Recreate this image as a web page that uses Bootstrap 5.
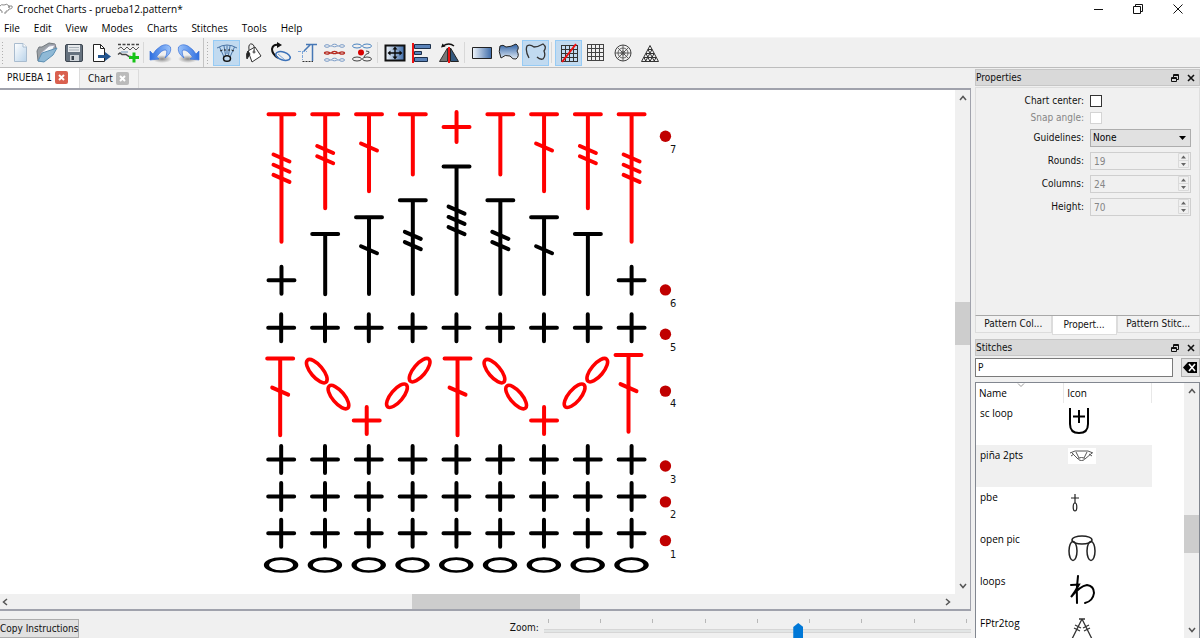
<!DOCTYPE html>
<html lang="en">
<head>
<meta charset="utf-8">
<meta name="viewport" content="width=device-width, initial-scale=1">
<title>Crochet Charts - prueba12.pattern*</title>
<link href="https://cdn.jsdelivr.net/npm/bootstrap@5.3.0/dist/css/bootstrap.min.css" rel="stylesheet">
<style>
  :root { --ui: "DejaVu Sans Condensed", "Noto Sans", sans-serif; --sys: "Open Sans", "Noto Sans", sans-serif; --edge: #a0a2ac; --face: #f0f0f0; }
  body { font: 10px/14px var(--ui); color: #111; background: var(--face); }
  button, input, select { font: inherit; color: inherit; border-radius: 0; }
  svg { display: block; flex: none; }
  .sys { font-family: var(--sys); color: #000; }
  .bare { border: 0; background: none; padding: 0; }
  .fit { min-width: 0; min-height: 0; }

  .titlebar { height: 18px; background: #fff; padding-right: 2px; }
  .win-btn { width: 40px; height: 18px; display: grid; place-items: center; }
  .menubar { height: 20px; background: #fff; border-bottom: 1px solid #f6f6f6; }
  .menubar a { color: #000; text-decoration: none; padding: 0 7px; line-height: 20px; }

  .tools { height: 30px; border-bottom: 1px solid #bdbdbd; }
  .grip { width: 3px; height: 24px; margin: 0 2px 0 1px; background: radial-gradient(circle, #b0b0b0 1px, transparent 1px) 0 0 / 3px 3px; }
  .tool { width: 27px; height: 26px; display: grid; place-items: center; border: 1px solid transparent; padding: 0; background: none; }
  .tool.on { background: #c1daf0; border-color: #96cbf5; }
  .gap-line { width: 1px; height: 21px; margin: 0 3px 0 2px; background: #d8d8d8; }
  .bar-edge { width: 1px; height: 29px; margin: 0 1px 0 2px; background: #c4c4c4; }

  .tabs { height: 20px; }
  .tab-doc { display: flex; align-items: center; gap: 3px; border: 0; border-right: 1px solid #dcdcdc; padding: 0 5px 0 7px; }
  .tab-doc.on { background: #fff; width: 80px; }
  .tab-doc.off { margin-top: 1px; width: 59px; padding-left: 8px; border-top: 1px solid #e2e2e2; background: #f2f2f2; }
  .x-box { width: 13px; height: 13px; border-radius: 2px; display: grid; place-items: center; background: #bbb; }
  .on .x-box { background: #d9604f; }
  .frame { border: solid var(--edge); border-width: 2px 1px 2px 0; background: #fff; }
  .chart { flex: 1 1 0; height: 100%; }
  .bar-v { width: 15px; background: var(--face); }
  .bar-h { height: 15px; background: var(--face); padding-right: 15px; }
  .arrow { flex: none; width: 15px; height: 16px; display: grid; place-items: center; }
  .thumb { background: #cdcdcd; }

  .footer-bar { height: 27px; }
  .push { width: 79px; height: 19px; border: 1px solid #adadad; border-left: 0; background: #e1e1e1; padding: 0; text-align: left; white-space: nowrap; }
  .zoom-label { margin: 0 5px 3px 0; }
  .zoom-box { width: 44%; }
  .ticks { height: 4px; margin: 0 4px; }
  .ticks i { width: 1px; background: #b8b8b8; }
  .zoom-range { appearance: none; -webkit-appearance: none; display: block; width: 100%; height: 18px; margin: 0; background: linear-gradient(#e2e5e5, #e2e5e5) 0 7px / 100% 2px no-repeat, linear-gradient(#d6d6d6, #d6d6d6) 0 6px / 100% 4px no-repeat; }
  .zoom-range::-webkit-slider-thumb { -webkit-appearance: none; width: 10px; height: 18px; background: #0078d7; clip-path: polygon(50% 0, 100% 4px, 100% 100%, 0 100%, 0 4px); }

  .dock { width: 225px; }
  .dock > * { flex: none; }
  .dock-title { height: 17px; background: #d9d9d9; border: 1px solid #c6c6c6; margin-top: 1px; }
  .dock-title h2 { font: inherit; margin: 0; }
  .panel { height: 229px; border: 1px solid #dedede; border-bottom-color: #a8a8a8; padding: 7px 8px 0 0; margin-top: 1px; }
  .form-grid { display: grid; grid-template-columns: 108fr 101fr; gap: 5px 6px; align-items: center; }
  .form-grid label { text-align: right; line-height: 12px; }
  .tick-box { appearance: none; width: 12px; height: 12px; margin: 0; border: 1px solid #333; background: #fff; display: block; }
  .tick-box:disabled { border-color: #d4d4d4; }
  .dim { color: #868686; }
  .pick { appearance: none; width: 100%; height: 18px; padding: 0 2px; border: 1px solid #adadad; background: #e1e1e1; color: #000; display: block; }
  .num { appearance: textfield; width: 100%; height: 18px; padding: 0 3px; border: 1px solid #cfcfcf; background: var(--face); color: #868686; display: block; }
  .num::-webkit-inner-spin-button { appearance: none; margin: 0; }
  .over { position: absolute; right: 2px; top: 1px; pointer-events: none; }

  .dock-tabs { height: 19px; }
  .dock-tab { border: 1px solid #dcdcdc; border-top: 0; background: #f2f2f2; padding: 0; height: 17px; }
  .dock-tab.on { background: #fff; height: 19px; }
  .find-row { margin-top: 2px; }
  .find { height: 19px; border: 1px solid #7a7a7a; background: #fff; padding: 0 2px; min-width: 0; }
  .clear { width: 19px; height: 19px; border: 1px solid #adadad; background: #e1e1e1; padding: 0; display: grid; place-items: center; }
  .dock > .list-frame { flex: 1 1 0; min-height: 0; border: 1px solid #828790; border-bottom: 0; background: #fff; margin-top: 5px; }
  .stitch-list { width: 176px; table-layout: fixed; border-collapse: collapse; }
  .stitch-list th { height: 20px; font-weight: 400; padding: 0 4px 0 3px; border-right: 1px solid #e8e8e8; }
  .stitch-list td { height: 42px; padding: 3px 0 0 4px; vertical-align: top; }
  .stitch-list .picked { background: #f0f0f0; }
  .sort-mark { position: absolute; left: 41px; top: 0; }
</style>
</head>
<body>
<div class="d-flex flex-column vh-100 overflow-hidden">
  <header>
    <div class="titlebar d-flex align-items-center sys">
      <svg width="13" height="12" viewBox="0 0 13 12" fill="none" stroke="#8a8a8a"><path d="M0 3Q1 1 4 2Q7 0 9 3L12 3Q13 6 9 6Q8 9 6 8V10M2 10V8Q0 8 0 6M4 10H6"/><path d="M8 4H10" stroke="#555"/></svg>
      <span class="ms-1 flex-grow-1">Crochet Charts - prueba12.pattern*</span>
      <button class="bare win-btn" aria-label="Minimize"><svg width="9" height="9" stroke="#111"><path d="M0 4.500H9"/></svg></button>
      <button class="bare win-btn" aria-label="Restore"><svg width="10" height="10" fill="none" stroke="#111"><path d="M.5 2.500H7.500V9.500H.5ZM2.500 2V.5H9.500V7.500H8"/></svg></button>
      <button class="bare win-btn" aria-label="Close"><svg width="10" height="10" stroke="#111"><path d="M.5 .5L9.500 9.500M9.500 .5L.5 9.500"/></svg></button>
    </div>
    <nav class="menubar d-flex sys">
      <a href="#" class="ps-1">File</a><a href="#">Edit</a><a href="#">View</a><a href="#">Modes</a><a href="#">Charts</a><a href="#">Stitches</a><a href="#">Tools</a><a href="#">Help</a>
    </nav>
    <div class="tools d-flex align-items-center">
      <svg width="0" height="0" class="position-absolute"><defs>
        <linearGradient id="paper" x2="1" y2="1"><stop offset="0" stop-color="#fff"/><stop offset="1" stop-color="#b9d3ea"/></linearGradient>
        <linearGradient id="arrowBlue" x2="1"><stop offset="0" stop-color="#2f6fe0"/><stop offset="1" stop-color="#9cc4fb"/></linearGradient>
        <linearGradient id="steel" x2="1"><stop offset="0" stop-color="#f2f7fc"/><stop offset="1" stop-color="#3c6aa8"/></linearGradient>
        <linearGradient id="steelDown" x2="0" y2="1"><stop offset="0" stop-color="#2f61a4"/><stop offset="1" stop-color="#e4eef8"/></linearGradient>
        <radialGradient id="shade"><stop offset="0" stop-color="#8a8a8a"/><stop offset="1" stop-color="#f0f0f0"/></radialGradient>
      </defs></svg>
      <span class="grip"></span>
      <button class="tool" aria-label="New"><svg width="22" height="22"><path d="M5.500 1.500H14L17.500 5V19.500H5.500Z" fill="url(#paper)" stroke="#a9bccf"/><path d="M14 1.500V5H17.500" fill="#fff" stroke="#a9bccf"/></svg></button>
      <button class="tool" aria-label="Open"><svg width="22" height="22"><path d="M1 9L3 5H6L13 1L19 2L20 6L8 19H2Z" fill="#9aa0a6" stroke="#72787e"/><path d="M5 11L13 4L19 3L16 9L8 17Z" fill="#f4f8fb" stroke="#aab"/><path d="M2 19L6 11L12 9L21 6L17 13L8 20Z" fill="#8fb9d6" stroke="#5d90b4"/></svg></button>
      <button class="tool" aria-label="Save"><svg width="22" height="22"><rect x="2.500" y="2.500" width="17" height="17" rx="1.500" fill="#66727f" stroke="#3d4650"/><path d="M5 3H17V10H5Z" fill="#e6e9ec"/><path d="M6 5.500H16M6 8H16" stroke="#a8b0b8"/><path d="M7 13H16V19H7Z" fill="#cfd4d9"/><path d="M8.500 14H11V18H8.500Z" fill="#39424c"/></svg></button>
      <button class="tool" aria-label="Export"><svg width="22" height="22"><path d="M3.500 2.500H10.500L14.500 6.500V19.500H3.500Z" fill="#fff" stroke="#222"/><path d="M10.500 2.500V6.500H14.500" fill="none" stroke="#222"/><path d="M8 13H15V10L21 14.500L15 19V16H8Z" fill="#23558f"/></svg></button>
      <button class="tool" aria-label="Add pattern"><svg width="24" height="22" fill="none" stroke="#444"><path d="M2 2.500H23" stroke-dasharray="3 1.500" stroke-width="1.600"/><path d="M2 7L5 5L8 8L11 5L14 8L17 5L20 8L23 5" stroke-width=".9"/><path d="M2 12.500L4 11L6 12.500H10L13 14.500H15" stroke-width="1.500"/><path d="M5 10H12" stroke="#6c93b8"/><path d="M18 10.500V20.500M13 15.500H23" stroke="#16c316" stroke-width="3"/></svg></button>
      <span class="gap-line"></span>
      <button class="tool" aria-label="Undo"><svg width="24" height="22"><ellipse cx="13" cy="17" rx="10" ry="4" fill="url(#shade)"/><path d="M1 9V18L10 17L7.500 15Q13 7 17 8Q19 10 16 16Q23 11 21.500 5Q18 1 12 4Q7 7 4 12Z" fill="url(#arrowBlue)" stroke="#3c72d8" stroke-width=".7"/></svg></button>
      <button class="tool" aria-label="Redo"><svg width="24" height="22"><ellipse cx="12" cy="17" rx="10" ry="4" fill="url(#shade)"/><path transform="matrix(-1 0 0 1 24 0)" d="M1 9V18L10 17L7.500 15Q13 7 17 8Q19 10 16 16Q23 11 21.500 5Q18 1 12 4Q7 7 4 12Z" fill="url(#arrowBlue)" stroke="#3c72d8" stroke-width=".7"/></svg></button>
      <span class="bar-edge"></span><span class="grip me-1"></span>
      <button class="tool on" aria-label="Stitch mode"><svg width="22" height="22" fill="none" stroke="#4a74a5"><path d="M1 6Q11 0 21 6M8 15L3.500 5M14 15L18.500 5M9.500 13L8 4M12.500 13L14 4M11 12V3.500"/><path d="M4 9L6.500 8M18 9L15.500 8M8 8H10M12 8H14" stroke="#222"/><ellipse cx="11" cy="16.500" rx="3.500" ry="2.800" stroke="#111" stroke-width="1.500"/></svg></button>
      <button class="tool" aria-label="Colour mode"><svg width="22" height="22" fill="none" stroke="#333"><path d="M5 9L12 5L18 14L9 20Z" fill="#fff"/><path d="M6 8Q5 1 9 2Q12 3 11 9M5 9Q3 11 4 16" /><path d="M5 9Q3 12 4 17L7 12Z" fill="#222"/><circle cx="11" cy="10" r="1"/></svg></button>
      <button class="tool" aria-label="Row mode"><svg width="22" height="22" fill="none"><path d="M9 3Q3 2 2 7Q2 12 8 16" stroke="#111" stroke-width="2"/><path d="M7 0L12 3L7 6Z" fill="#111"/><ellipse cx="13" cy="14" rx="7.500" ry="4" transform="rotate(18 13 14)" stroke="#3b71b8" stroke-width="1.500"/><path d="M8 12L15 18" stroke="#7ba5dc"/></svg></button>
      <button class="tool" aria-label="Angle mode"><svg width="22" height="22" fill="none"><path d="M9 2.500H20M15.500 3V19M7 9L13 3" stroke="#4677b5" stroke-width="1.500"/><path d="M5.500 19.500H16" stroke="#333" stroke-dasharray="2 1"/><path d="M1 9.500H10M5.500 9V18" stroke="#7fa8da" stroke-dasharray="3 1"/></svg></button>
      <button class="tool" aria-label="Stitch rows"><svg width="23" height="22" fill="none"><g id="chainA" stroke="#7a9cc8"><ellipse cx="4" cy="4" rx="2.500" ry="1.300"/><ellipse cx="11.500" cy="3.500" rx="2.500" ry="1.300"/><ellipse cx="19" cy="4" rx="2.500" ry="1.300"/><path d="M6.500 4H9M14 4H16.500"/></g><use href="#chainA" y="14"/><g stroke="#b52a20" stroke-width="1.300"><ellipse cx="4" cy="11" rx="2.500" ry="1.100"/><ellipse cx="11.500" cy="10.500" rx="2.500" ry="1.100"/><ellipse cx="19" cy="11" rx="2.500" ry="1.100"/><path d="M6.500 11H9M14 11H16.500"/></g></svg></button>
      <button class="tool" aria-label="Chart centre"><svg width="22" height="22" fill="none"><g stroke="#4b84c0"><ellipse cx="6" cy="4" rx="4.500" ry="2"/><ellipse cx="16" cy="4" rx="4.500" ry="2"/></g><g stroke="#444"><ellipse cx="6" cy="17" rx="4.500" ry="2"/><ellipse cx="16" cy="17" rx="4.500" ry="2"/><path d="M15 9Q19 9 18 11Q14 12 13 15"/></g><circle cx="10" cy="10.500" r="3" fill="#d80000"/></svg></button>
      <span class="gap-line"></span>
      <button class="tool" aria-label="Distribute"><svg width="22" height="22"><path d="M1.500 3.500H20.500V18.500H1.500Z" fill="url(#steel)" stroke="#111" stroke-width="2"/><path d="M11 4.500L13.500 7.500H11.700V10.300H15.500V8.500L18.500 11L15.500 13.500V11.700H11.700V14.500H13.500L11 17.500L8.500 14.500H10.300V11.700H6.500V13.500L3.500 11L6.500 8.500V10.300H10.300V7.500H8.500Z" fill="#0a0a0a"/></svg></button>
      <button class="tool" aria-label="Align"><svg width="22" height="22"><path d="M2 1V21" stroke="#e11" stroke-width="2"/><path d="M3.500 2.500H19.500V6.500H3.500ZM3.500 9.500H10.500V12.500H3.500ZM3.500 15.500H16.500V19.500H3.500Z" fill="#5a82b8" stroke="#1c2f4a"/></svg></button>
      <button class="tool" aria-label="Mirror"><svg width="22" height="22"><path d="M9.500 6V19.500H1.500Z" fill="#777" stroke="#333"/><path d="M12.500 6V19.500H20.500Z" fill="#33597f" stroke="#222"/><path d="M11 5V21" stroke="#e11" stroke-width="2"/><path d="M5 4Q11 0 16 4" fill="none" stroke="#111" stroke-width="1.500"/><path d="M3 5.500L4.500 1.500L7.500 4.500Z" fill="#111"/></svg></button>
      <span class="gap-line"></span>
      <button class="tool" aria-label="Rectangle fill"><svg width="22" height="22"><path d="M1.500 5.500H20.500V16.500H1.500Z" fill="url(#steel)" stroke="#222"/></svg></button>
      <button class="tool" aria-label="Shape fill"><svg width="22" height="22"><path d="M3 16Q0 9 2 4Q5 2 8 5Q13 5 18 2Q22 5 19 9Q22 14 18 17Q15 18 12 14Q7 12 3 16Z" fill="url(#steelDown)" stroke="#222"/></svg></button>
      <button class="tool on" aria-label="Shape outline"><svg width="22" height="22" fill="none" stroke="#333" stroke-width="1.300"><path d="M4 16Q0 9 2 4Q5 2 9 5Q13 5 18 2Q22 5 19 9Q21 14 18 17Q15 18 12 15"/></svg></button>
      <span class="gap-line"></span>
      <button class="tool on" aria-label="No grid"><svg width="22" height="22" fill="none"><path d="M3.500 3V20M7.500 3V20M11.500 3V20M15.500 3V20M19.500 3V20M3 3.500H20M3 7.500H20M3 11.500H20M3 15.500H20M3 19.500H20" stroke="#333"/><path d="M4 20L18 2" stroke="#f01010" stroke-width="2"/></svg></button>
      <button class="tool" aria-label="Square grid"><svg width="22" height="22" stroke="#444"><path d="M2.500 2V19M6.500 2V19M10.500 2V19M14.500 2V19M18.500 2V19M2 2.500H19M2 6.500H19M2 10.500H19M2 14.500H19M2 18.500H19"/></svg></button>
      <button class="tool" aria-label="Round grid"><svg width="22" height="22" fill="none" stroke="#444"><circle cx="11" cy="11" r="8"/><circle cx="11" cy="11" r="5" stroke-width=".8"/><circle cx="11" cy="11" r="2" stroke-width=".8"/><path d="M11 3V19M3 11H19M5.400 5.400L16.600 16.600M16.600 5.400L5.400 16.600" stroke-width=".8"/></svg></button>
      <button class="tool" aria-label="Triangle grid"><svg width="22" height="22" fill="none" stroke="#333"><path d="M11 3.500L19.500 19.500H2.500ZM9 7.500H13M7 11.500H15M5 15.500H17M9 7.500L15.500 19.500M7 11.500L11 19.500M5 15.500L7 19.500M13 7.500L6.500 19.500M15 11.500L11 19.500M17 15.500L15 19.500"/></svg></button>
    </div>
  </header>

  <div class="d-flex flex-grow-1 fit">
    <main class="d-flex flex-column flex-grow-1 fit">
      <div class="tabs d-flex">
        <button class="tab-doc on">PRUEBA 1 <span class="x-box"><svg width="7" height="7" stroke="#fff" stroke-width="2"><path d="M1 1L6 6M6 1L1 6"/></svg></span></button>
        <button class="tab-doc off">Chart <span class="x-box"><svg width="7" height="7" stroke="#fff" stroke-width="2"><path d="M1 1L6 6M6 1L1 6"/></svg></span></button>
      </div>
      <div class="frame d-flex flex-column flex-grow-1 fit">
        <div class="d-flex flex-grow-1 fit">
          <svg class="chart fit" viewBox="0 90 956 505" role="img" aria-label="Crochet chart" fill="none" stroke-linecap="round">
            <defs>
              <path id="sc" d="M-13 0H13M0-13.500V13.500"/>
              <path id="bar" d="M-8-3.500L8 3.500"/>
              <path id="hdc" d="M-13 0H13M0 0V60.300"/>
              <g id="dc"><path d="M-13 0H13M0 0V77"/><use href="#bar" y="32.700"/></g>
              <g id="tr"><path d="M-13 0H13M0 0V94"/><use href="#bar" y="35.200"/><use href="#bar" y="45.500"/></g>
              <g id="dtr"><path d="M-13 0H13M0 0V127.700"/><use href="#bar" y="43.700"/><use href="#bar" y="54"/><use href="#bar" y="64.200"/></g>
              <path id="ch" fill-rule="evenodd" stroke="none" d="M-17.300 0A17.300 7.800 0 1 0 17.300 0A17.300 7.800 0 1 0-17.300 0ZM-12 0A12 5.200 0 1 1 12 0A12 5.200 0 1 1-12 0Z"/>
              <g id="scRow"><use href="#sc" x="281.300"/><use href="#sc" x="325.200"/><use href="#sc" x="369.100"/><use href="#sc" x="413"/><use href="#sc" x="456.900"/><use href="#sc" x="500.700"/><use href="#sc" x="544.600"/><use href="#sc" x="588.500"/><use href="#sc" x="632.400"/></g>
              <g id="chPair"><ellipse rx="14.500" ry="6" transform="translate(317 371.700) rotate(50)"/><ellipse rx="14.500" ry="6" transform="translate(338.700 397.700) rotate(50)"/><ellipse rx="14.500" ry="6" transform="translate(420 370.700) rotate(-50)"/><ellipse rx="14.500" ry="6" transform="translate(397.300 396.300) rotate(-50)"/></g>
            </defs>
            <g stroke="#f00" stroke-width="4">
              <use href="#dtr" x="281.600" y="114.400"/><use href="#tr" x="325.400" y="114.400"/><use href="#dc" x="369.300" y="114.400"/><use href="#hdc" x="413.200" y="114.400"/>
              <path d="M444 127H470M457 112V142"/>
              <use href="#hdc" x="500.900" y="114.400"/><use href="#dc" x="544.700" y="114.400"/><use href="#tr" x="588.600" y="114.400"/><use href="#dtr" x="632.400" y="114.400"/>
              <use href="#dc" x="280.300" y="359"/><use href="#dc" x="458" y="359"/><use href="#dc" x="629.300" y="355.500"/>
              <use href="#sc" x="367" y="421.200"/><use href="#sc" x="544.700" y="421.200"/>
              <g stroke-width="3.600"><use href="#chPair"/><use href="#chPair" x="178"/></g>
            </g>
            <g stroke="#000" stroke-width="4">
              <use href="#sc" x="281.600" y="280.700"/><use href="#hdc" x="325.400" y="234.300"/><use href="#dc" x="369.300" y="217.400"/><use href="#tr" x="413.200" y="200.400"/><use href="#dtr" x="457" y="166.700"/><use href="#tr" x="500.900" y="200.400"/><use href="#dc" x="544.700" y="217.400"/><use href="#hdc" x="588.600" y="234.300"/><use href="#sc" x="632.400" y="280.700"/>
              <use href="#scRow" y="328.200"/><use href="#scRow" y="460.200"/><use href="#scRow" y="497.200"/><use href="#scRow" y="534.200"/>
            </g>
            <g fill="#000"><use href="#ch" x="281.200" y="566"/><use href="#ch" x="325.100" y="566"/><use href="#ch" x="369" y="566"/><use href="#ch" x="412.900" y="566"/><use href="#ch" x="456.700" y="566"/><use href="#ch" x="500.600" y="566"/><use href="#ch" x="544.500" y="566"/><use href="#ch" x="588.400" y="566"/><use href="#ch" x="632.300" y="566"/></g>
            <g fill="#c00000"><circle cx="666.300" cy="136.300" r="5.700"/><circle cx="666.300" cy="290.300" r="5.700"/><circle cx="666.300" cy="334.700" r="5.700"/><circle cx="666.300" cy="391.700" r="5.700"/><circle cx="666.300" cy="466.700" r="5.700"/><circle cx="666.300" cy="502.700" r="5.700"/><circle cx="666.300" cy="541.500" r="5.700"/></g>
            <g fill="#111" font-size="11"><text x="671" y="153">7</text><text x="671" y="307">6</text><text x="671" y="352">5</text><text x="671" y="408">4</text><text x="671" y="484">3</text><text x="671" y="519">2</text><text x="671" y="559">1</text></g>
          </svg>
          <div class="bar-v d-flex flex-column">
            <span class="arrow"><svg width="8" height="6" fill="none" stroke="#555" stroke-width="1.500"><path d="M1 5L4 1.500L7 5"/></svg></span>
            <span style="flex:196"></span><span class="thumb" style="flex:44"></span><span style="flex:233"></span>
            <span class="arrow"><svg width="8" height="6" fill="none" stroke="#555" stroke-width="1.500"><path d="M1 1L4 4.500L7 1"/></svg></span>
          </div>
        </div>
        <div class="bar-h d-flex">
          <span class="arrow"><svg width="12" height="8" fill="none" stroke="#555" stroke-width="1.500"><path d="M5 1L1.500 4L5 7"/></svg></span>
          <span style="flex:397"></span><span class="thumb" style="flex:167"></span><span style="flex:360"></span>
          <span class="arrow"><svg width="6" height="8" fill="none" stroke="#555" stroke-width="1.500"><path d="M1 1L4.500 4L1 7"/></svg></span>
        </div>
      </div>
      <div class="footer-bar d-flex align-items-end">
        <button class="push mb-auto mt-2">Copy Instructions</button>
        <label for="zoom" class="zoom-label ms-auto">Zoom:</label>
        <div class="zoom-box overflow-hidden h-100 pt-2">
          <div class="ticks d-flex justify-content-between"><i></i><i></i><i></i><i></i><i></i><i></i><i></i><i></i><i></i></div>
          <input id="zoom" class="zoom-range" type="range" min="0" max="1000" value="598">
        </div>
      </div>
    </main>

    <aside class="dock d-flex flex-column flex-shrink-0 ms-1">
      <div class="dock-title d-flex align-items-center gap-2"><h2 class="flex-grow-1">Properties</h2>
        <button class="bare" aria-label="Float"><svg width="8" height="8" fill="none" stroke="#111"><path d="M.5 3.500H5.500V7.500H.5ZM.5 4.500H5M2.500 3V.5H7.500V5.500H6M2.500 1.500H7.500"/></svg></button>
        <button class="bare me-1" aria-label="Close"><svg width="8" height="8" stroke="#111" stroke-width="1.600"><path d="M1 1L7 7M7 1L1 7"/></svg></button>
      </div>
      <div class="panel">
        <div class="form-grid">
          <label for="cc">Chart center:</label><input id="cc" class="tick-box" type="checkbox">
          <label for="sa" class="dim">Snap angle:</label><input id="sa" class="tick-box" type="checkbox" disabled>
          <label for="gl">Guidelines:</label><div class="position-relative"><select id="gl" class="pick"><option>None</option></select><svg class="over" width="11" height="15"><path d="M1 6H8L4.500 10Z" fill="#000"/></svg></div>
          <label for="ro">Rounds:</label><div class="position-relative"><input id="ro" class="num" type="number" value="19" disabled><svg class="over" width="11" height="15"><path id="spin" d="M.5 .5H10.500V14.500H.5ZM.5 7.500H10.500" fill="none" stroke="#dadada"/><path d="M3 5.500L5.500 2.500L8 5.500ZM3 10L5.500 13L8 10Z" fill="#666"/></svg></div>
          <label for="co">Columns:</label><div class="position-relative"><input id="co" class="num" type="number" value="24" disabled><svg class="over" width="11" height="15"><use href="#spin"/><path d="M3 5.500L5.500 2.500L8 5.500ZM3 10L5.500 13L8 10Z" fill="#666"/></svg></div>
          <label for="he">Height:</label><div class="position-relative"><input id="he" class="num" type="number" value="70" disabled><svg class="over" width="11" height="15"><use href="#spin"/><path d="M3 5.500L5.500 2.500L8 5.500ZM3 10L5.500 13L8 10Z" fill="#666"/></svg></div>
        </div>
      </div>
      <div class="dock-tabs d-flex">
        <button class="dock-tab" style="flex:76">Pattern Col...</button><button class="dock-tab on" style="flex:64">Propert...</button><button class="dock-tab" style="flex:83">Pattern Stitc...</button>
      </div>
      <div class="dock-title d-flex align-items-center gap-2 mt-1"><h2 class="flex-grow-1">Stitches</h2>
        <button class="bare" aria-label="Float"><svg width="8" height="8" fill="none" stroke="#111"><path d="M.5 3.500H5.500V7.500H.5ZM.5 4.500H5M2.500 3V.5H7.500V5.500H6M2.500 1.500H7.500"/></svg></button>
        <button class="bare me-1" aria-label="Close"><svg width="8" height="8" stroke="#111" stroke-width="1.600"><path d="M1 1L7 7M7 1L1 7"/></svg></button>
      </div>
      <div class="find-row d-flex"><input class="find flex-grow-1 me-2" value="P" aria-label="Find stitch"><button class="clear" aria-label="Clear"><svg width="15" height="11"><path d="M0 5.500L5 0H14V11H5Z" fill="#000"/><path d="M6 2L12 9M12 2L6 9" stroke="#fff" stroke-width="1.600"/></svg></button></div>
      <div class="list-frame d-flex overflow-hidden">
        <div class="flex-grow-1 overflow-hidden position-relative">
          <svg class="sort-mark" width="8" height="5" fill="none" stroke="#999"><path d="M1 .5L4 3.500L7 .5"/></svg>
          <table class="stitch-list sys">
            <thead><tr><th>Name</th><th>Icon</th></tr></thead>
            <tbody>
              <tr><td>sc loop</td><td><svg width="22" height="30" fill="none" stroke="#000" stroke-width="2"><path d="M2 2V18Q2 27 11 27Q20 27 20 18V2M5 10.500H17M11 4V17"/></svg></td></tr>
              <tr class="picked"><td>piña 2pts</td><td><svg width="28" height="16" fill="none" stroke="#555"><path d="M0 0H28V16H0Z" fill="#fff" stroke="none"/><path d="M2 5L7 3H20L25 5M4 5L10 11M8 4L11 10M19 4L16 10M24 5L17 11M3 8L6 6M24 8L21 6"/><ellipse cx="13.500" cy="11" rx="3" ry="1.500"/></svg></td></tr>
              <tr><td>pbe</td><td><svg width="14" height="24" fill="none" stroke="#222" stroke-width="1.200"><path d="M3 8H11M7 4V13"/><ellipse cx="7" cy="17" rx="1.800" ry="4"/></svg></td></tr>
              <tr><td>open pic</td><td><svg width="30" height="32" fill="none" stroke="#222" stroke-width="1.500"><ellipse cx="14" cy="8" rx="10" ry="4"/><ellipse cx="5" cy="19" rx="4" ry="9.500"/><ellipse cx="23" cy="19" rx="4" ry="9.500"/></svg></td></tr>
              <tr><td>loops</td><td><svg width="30" height="32" fill="none" stroke="#000" stroke-width="2"><path d="M10 2Q8 15 9 29M3 11L11 10.500Q7 18 3 23Q12 12 19 11Q26 12 26 19Q25 27 17 29" stroke-linecap="round"/></svg></td></tr>
              <tr><td>FPtr2tog</td><td><svg width="30" height="32" fill="none" stroke="#333" stroke-width="1.300"><path d="M11 3H17M14 3L2 27M14 3L26 27M7 9L13 12M6 12L12 15M15 12L21 9M16 15L22 12"/></svg></td></tr>
            </tbody>
          </table>
        </div>
        <div class="bar-v d-flex flex-column">
          <span class="arrow"><svg width="8" height="6" fill="none" stroke="#555" stroke-width="1.500"><path d="M1 5L4 1.500L7 5"/></svg></span>
          <span style="flex:116"></span><span class="thumb" style="flex:38"></span><span style="flex:69"></span>
          <span class="arrow"><svg width="8" height="6" fill="none" stroke="#555" stroke-width="1.500"><path d="M1 1L4 4.500L7 1"/></svg></span>
        </div>
      </div>
    </aside>
  </div>
</div>
<script src="https://cdn.jsdelivr.net/npm/bootstrap@5.3.0/dist/js/bootstrap.bundle.min.js"></script>
</body>
</html>
